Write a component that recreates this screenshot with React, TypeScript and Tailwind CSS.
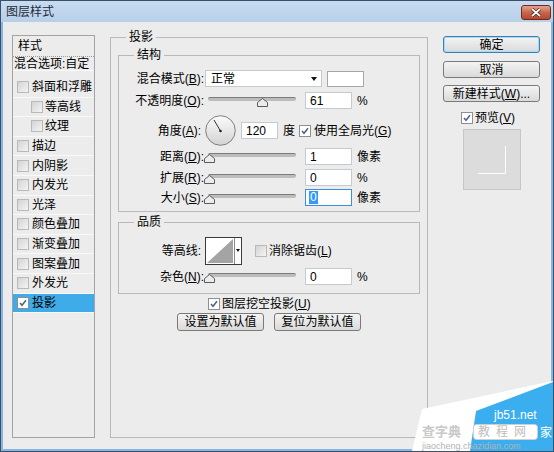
import type { ReactNode } from "react";

type Effect = { name: string; sub?: boolean; checked?: boolean; active?: boolean };

const effects: Effect[] = [
  { name: "斜面和浮雕" },
  { name: "等高线", sub: true },
  { name: "纹理", sub: true },
  { name: "描边" },
  { name: "内阴影" },
  { name: "内发光" },
  { name: "光泽" },
  { name: "颜色叠加" },
  { name: "渐变叠加" },
  { name: "图案叠加" },
  { name: "外发光" },
  { name: "投影", checked: true, active: true },
];

// hotkey letter, underlined like the Windows dialog
function Key({ k }: { k: string }) {
  return (
    <>
      (<span className="underline">{k}</span>)
    </>
  );
}

function Checkbox({ checked = false }: { checked?: boolean }) {
  return (
    <span
      className={
        checked
          ? "flex h-[12px] w-[12px] shrink-0 items-center justify-center border border-[#8e8f8f] bg-white"
          : "flex h-[12px] w-[12px] shrink-0 border border-[#b9b9b9] bg-linear-to-br from-[#d4d4d4] to-[#f4f4f4]"
      }
    >
      {checked && (
        <svg width="8" height="8" viewBox="0 0 8 8">
          <path d="M1 4 L3 6.3 L7 1.2" fill="none" stroke="#4b6287" strokeWidth="1.5" />
        </svg>
      )}
    </span>
  );
}

function GroupBox({ title, className, children }: { title: string; className: string; children: ReactNode }) {
  return (
    <div className={`relative border border-[#b9b9b9] ${className}`}>
      <span className="absolute -top-[8px] left-[15px] bg-[#ececec] px-[3px] leading-[14px]">{title}</span>
      {children}
    </div>
  );
}

function Field({ value, focused = false }: { value: string; focused?: boolean }) {
  return (
    <div
      className={
        focused
          ? "flex h-[17px] w-[47px] shrink-0 items-center border border-[#3d8ee0] bg-white pl-[3px]"
          : "flex h-[17px] w-[47px] shrink-0 items-center border border-[#c5c9d0] bg-white pl-[4px]"
      }
    >
      {focused ? <span className="bg-[#3399ff] px-[1px] leading-[13px] text-white">{value}</span> : <span>{value}</span>}
    </div>
  );
}

function Slider({ pos }: { pos: number }) {
  return (
    <div className="relative h-[17px] w-[100px] shrink-0">
      <div className="ml-[3px] mt-[5px] h-[4px] w-[88px] rounded-[2px] border-t border-[#7b7b7b] bg-[#bdbdbd]" />
      <svg className="absolute top-[6px]" style={{ left: pos }} width="11" height="9" viewBox="0 0 11 9">
        <path d="M5.5 0.5 L10.5 4.5 L10.5 8.5 L0.5 8.5 L0.5 4.5 Z" fill="#ececec" stroke="#5a5a5a" />
      </svg>
    </div>
  );
}

function Label({ children, pr = "pr-[1px]" }: { children: ReactNode; pr?: string }) {
  return <div className={`w-[86px] shrink-0 text-right ${pr}`}>{children}</div>;
}

function SliderRow({ label, pos, value, unit, focused, className }: {
  label: ReactNode; pos: number; value: string; unit: string; focused?: boolean; className: string;
}) {
  return (
    <div className={`flex h-[17px] items-center ${className}`}>
      <Label>{label}</Label>
      <Slider pos={pos} />
      <Field value={value} focused={focused} />
      <span className="ml-[5px]">{unit}</span>
    </div>
  );
}

function Button({ children, primary = false, className = "" }: { children: ReactNode; primary?: boolean; className?: string }) {
  return (
    <div
      className={
        (primary
          ? "border-[#3c7fb1] shadow-[inset_0_0_0_1px_#a6daf6] "
          : "border-[#7a7a7a] ") +
        "flex h-[17px] items-center justify-center rounded-[3px] border bg-linear-to-b from-[#f4f4f4] to-[#dadada] leading-none " +
        className
      }
    >
      {children}
    </div>
  );
}

export default function App() {
  return (
    <div className="relative flex h-[452px] w-[554px] flex-col overflow-hidden border border-[#3b4f66] font-['Liberation_Sans','Noto_Sans_CJK_SC',sans-serif] text-[12px] leading-[14px] text-black">
      {/* title bar */}
      <div className="flex h-[21px] shrink-0 items-start justify-between bg-linear-to-b from-[#c7dcf1] to-[#b7cfe8] pl-[5px] pr-[2px]">
        <span className="mt-[4px] text-[#1e2a38]">图层样式</span>
        <div className="mt-[4px] flex h-[15px] w-[30px] items-center justify-center rounded-[3px] border border-[#6d2a1f] bg-linear-to-b from-[#e6a48f] via-[#c8664c] to-[#b4482f]">
          <svg width="12" height="9" viewBox="0 0 12 9">
            <path d="M2 1 L10 8 M10 1 L2 8" stroke="#4a1c14" strokeWidth="3.2" />
            <path d="M2 1 L10 8 M10 1 L2 8" stroke="#ffffff" strokeWidth="1.7" />
          </svg>
        </div>
      </div>

      {/* dialog body */}
      <div className="flex flex-1 items-start border-x-2 border-b-2 border-[#86b6e4] bg-[#ececec] pl-[9px] pt-[13px]">
        {/* style list */}
        <div className="flex h-[403px] w-[83px] shrink-0 flex-col border border-[#a3a3a3]">
          <div className="flex h-[21px] items-center border-b border-dotted border-[#9a9a9a] pl-[5px]">样式</div>
          <div className="flex h-[14px] items-center border-b border-[#fbfbfb] pl-[1px]">混合选项:自定</div>
          <div className="h-[7px]" />
          {effects.map((e) => (
            <div
              key={e.name}
              className={
                (e.active ? "bg-[#3fabe8] " : "") +
                (e.sub ? "pl-[18px] " : "pl-[4px] ") +
                "flex h-[19.6px] items-center border-b border-[#f9f9f9]"
              }
            >
              <Checkbox checked={e.checked} />
              <span className={e.sub ? "ml-[2px]" : "ml-[3px]"}>{e.name}</span>
            </div>
          ))}
        </div>

        {/* 投影 settings */}
        <GroupBox title="投影" className="ml-[15px] mt-[2px] h-[401px] w-[318px] shrink-0 px-[7px]">
          <GroupBox title="结构" className="mt-[17px] h-[157px] w-[302px]">
            <div className="mt-[14px] flex h-[17px] items-center">
              <Label>混合模式<Key k="B" />:</Label>
              <div className="flex h-[17px] w-[117px] items-center justify-between border border-[#c5c9d0] bg-white pl-[5px] pr-[4px]">
                <span>正常</span>
                <svg width="6" height="4" viewBox="0 0 6 4">
                  <path d="M0 0 L6 0 L3 4 Z" fill="#111" />
                </svg>
              </div>
              <div className="ml-[5px] h-[16px] w-[37px] border border-[#a6a6a6] bg-white" />
            </div>
            <SliderRow className="mt-[5px]" label={<>不透明度<Key k="O" />:</>} pos={52} value="61" unit="%" />
            <div className="mt-[6px] flex h-[31px] items-center">
              <Label pr="pr-[4px]">角度<Key k="A" />:</Label>
              <svg width="31" height="31" viewBox="0 0 31 31" className="shrink-0">
                <defs>
                  <linearGradient id="dial" x1="0" y1="0" x2="0" y2="1">
                    <stop offset="0" stopColor="#fbfbfb" />
                    <stop offset="1" stopColor="#d3d3d3" />
                  </linearGradient>
                </defs>
                <circle cx="15.5" cy="15.5" r="14.8" fill="url(#dial)" stroke="#7f7f7f" />
                <path d="M15.5 16 L9 5" stroke="#333" strokeWidth="1" />
                <circle cx="15.5" cy="16" r="1.3" fill="#222" />
              </svg>
              <div className="ml-[5px] flex h-[17px] w-[37px] items-center border border-[#c5c9d0] bg-white pl-[4px]">120</div>
              <span className="ml-[5px]">度</span>
              <span className="ml-[4px]">
                <Checkbox checked />
              </span>
              <span className="ml-[3px] whitespace-nowrap">使用全局光<Key k="G" /></span>
            </div>
            <SliderRow className="mt-[2px]" label={<>距离<Key k="D" />:</>} pos={-1} value="1" unit="像素" />
            <SliderRow className="mt-[4px]" label={<>扩展<Key k="R" />:</>} pos={-1} value="0" unit="%" />
            <SliderRow className="mt-[3px]" label={<>大小<Key k="S" />:</>} pos={-1} value="0" unit="像素" focused />
          </GroupBox>

          <GroupBox title="品质" className="mt-[10px] h-[72px] w-[302px]">
            <div className="mt-[14px] flex h-[28px] items-center">
              <Label pr="pr-[4px]">等高线:</Label>
              <svg width="37" height="28" viewBox="0 0 37 28" className="shrink-0">
                <rect x="0.5" y="0.5" width="36" height="27" fill="#fff" stroke="#3a3a3a" />
                <path d="M2 26 L28 2 L28 26 Z" fill="#a4a4a4" />
                <path d="M29.5 1 L29.5 27" stroke="#8a8a8a" />
                <path d="M31 12 L35 12 L33 15 Z" fill="#111" />
              </svg>
              <span className="ml-[13px]">
                <Checkbox />
              </span>
              <span className="ml-[2px]">消除锯齿<Key k="L" /></span>
            </div>
            <SliderRow className="mt-[3px]" label={<>杂色<Key k="N" />:</>} pos={-1} value="0" unit="%" />
          </GroupBox>

          <div className="mt-[3px] flex h-[14px] items-center pl-[90px]">
            <Checkbox checked />
            <span className="ml-[2px]">图层挖空投影<Key k="U" /></span>
          </div>
          <div className="mt-[2px] flex justify-center gap-[10px]">
            <Button className="h-[18px] w-[87px]">设置为默认值</Button>
            <Button className="h-[18px] w-[87px]">复位为默认值</Button>
          </div>
        </GroupBox>

        {/* buttons + preview */}
        <div className="ml-[15px] mt-[1px] flex w-[97px] shrink-0 flex-col">
          <Button primary>确定</Button>
          <Button className="mt-[8px]">取消</Button>
          <Button className="mt-[7px]">新建样式<Key k="W" />...</Button>
          <div className="mt-[10px] flex h-[12px] items-center pl-[18px]">
            <Checkbox checked />
            <span className="ml-[2px]">预览<Key k="V" /></span>
          </div>
          <div className="ml-[20px] mt-[5px] h-[61px] w-[58px] border border-[#c6c6c6] bg-[#dcdcdc]">
            <svg width="56" height="59" viewBox="0 0 56 59">
              <path d="M41.5 16 L41.5 43.5 L14 43.5" fill="none" stroke="#ffffff" />
            </svg>
          </div>
        </div>
      </div>

      {/* site watermark in the corner */}
      <svg className="absolute bottom-0 right-0" width="141" height="72" viewBox="0 0 141 72">
        <path d="M141 2 L10 30 L0 72 L141 72 Z" fill="#ffffff" />
        <path d="M141 3 L64 32 L58 72 L141 72 Z" fill="#3aaeee" />
        <text x="82" y="40" fill="#ffffff" fontSize="12" fontFamily="Liberation Sans, sans-serif">jb51.net</text>
        <text x="10" y="57" fill="#c9c9c9" fontSize="13" fontWeight="bold" fontFamily="Noto Sans CJK SC, sans-serif">查字典</text>
        <rect x="61.5" y="45.5" width="64" height="15" rx="3" fill="#ffffff" stroke="#cfcfcf" />
        <text x="66" y="57" fill="#bdbdbd" fontSize="12" fontFamily="Noto Sans CJK SC, sans-serif" letterSpacing="6">教程网</text>
        <text x="128" y="58" fill="#ffffff" fontSize="12" fontFamily="Noto Sans CJK SC, sans-serif">家</text>
        <text x="10" y="70" fill="#b3b3b3" fontSize="9" fontFamily="Liberation Sans, sans-serif">jiaocheng.chazidian.com</text>
      </svg>
    </div>
  );
}
